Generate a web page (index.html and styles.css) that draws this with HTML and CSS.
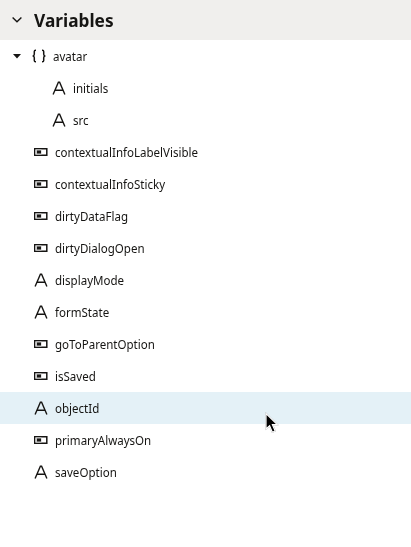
FILE: index.html
```html
<!DOCTYPE html>
<html lang="en">
<head>
<meta charset="utf-8">
<title>Variables</title>
<link rel="stylesheet" href="styles.css">
</head>
<body>
<svg class="defs" aria-hidden="true">
  <symbol id="string" viewBox="0 0 14 14"><path d="M1.1 13.5 6.4 1.3H7.6L12.9 13.5M3.1 9.3H10.9" fill="none" stroke="currentColor" stroke-width="1.4"/></symbol>
  <symbol id="boolean" viewBox="0 0 14 14"><path d="M.7 3.7h12.1v6.6H.7z" fill="#fff" stroke="currentColor" stroke-width="1.5"/><path d="M1.4 4.4h6.1v5.2H1.4z" fill="#c8c8c8"/><path d="M3 5.5h4v3H3z" fill="currentColor"/></symbol>
  <symbol id="object" viewBox="0 0 14 14"><path d="M4 1.2H3.6Q2.3 1.2 2.3 2.5V5.3Q2.3 7 .6 7Q2.3 7 2.3 8.7V11.5Q2.3 12.8 3.6 12.8H4M10 1.2H10.4Q11.7 1.2 11.7 2.5V5.3Q11.7 7 13.4 7Q11.7 7 11.7 8.7V11.5Q11.7 12.8 10.4 12.8H10" fill="none" stroke="currentColor" stroke-width="1.5"/></symbol>
</svg>
<header class="header">
  <svg class="chevron" viewBox="0 0 10 6"><path d="M.6.6 5 4.8 9.4.6" fill="none" stroke="currentColor" stroke-width="1.4"/></svg>
  <h1 class="title">Variables</h1>
</header>
<ul class="tree">
  <li class="row parent"><svg class="caret" viewBox="0 0 8 5"><path d="M0 0h8L4 4.6z" fill="currentColor"/></svg><svg class="icon"><use href="#object"/></svg><span class="label">avatar</span></li>
  <li class="row child"><svg class="icon"><use href="#string"/></svg><span class="label">initials</span></li>
  <li class="row child"><svg class="icon"><use href="#string"/></svg><span class="label">src</span></li>
  <li class="row"><svg class="icon"><use href="#boolean"/></svg><span class="label">contextualInfoLabelVisible</span></li>
  <li class="row"><svg class="icon"><use href="#boolean"/></svg><span class="label">contextualInfoSticky</span></li>
  <li class="row"><svg class="icon"><use href="#boolean"/></svg><span class="label">dirtyDataFlag</span></li>
  <li class="row"><svg class="icon"><use href="#boolean"/></svg><span class="label">dirtyDialogOpen</span></li>
  <li class="row"><svg class="icon"><use href="#string"/></svg><span class="label">displayMode</span></li>
  <li class="row"><svg class="icon"><use href="#string"/></svg><span class="label">formState</span></li>
  <li class="row"><svg class="icon"><use href="#boolean"/></svg><span class="label">goToParentOption</span></li>
  <li class="row"><svg class="icon"><use href="#boolean"/></svg><span class="label">isSaved</span></li>
  <li class="row hovered"><svg class="icon"><use href="#string"/></svg><span class="label">objectId</span></li>
  <li class="row"><svg class="icon"><use href="#boolean"/></svg><span class="label">primaryAlwaysOn</span></li>
  <li class="row"><svg class="icon"><use href="#string"/></svg><span class="label">saveOption</span></li>
</ul>
<svg class="cursor" viewBox="0 0 14 22"><path d="M1 1.5V17L4.6 13.8 7.3 20.2 10.2 19 7.4 12.6H12.3Z" fill="#000" stroke="#fff" stroke-width="1.2"/></svg>
</body>
</html>
```
FILE: styles.css
```css
body {
  margin: 0;
  height: 547px;
  overflow: hidden;
  background: #fff;
  color: #161513;
  font-family: "Noto Sans", sans-serif;
}
.defs {
  position: absolute;
  width: 0;
  height: 0;
}
.header {
  display: flex;
  align-items: center;
  height: 40px;
  padding-left: 12px;
  background: #f0efed;
}
.chevron {
  width: 10px;
  height: 6px;
  margin-right: 12px;
}
.title {
  margin: 0;
  font-size: 18.5px;
  font-weight: 700;
  line-height: 24px;
  transform: scaleX(0.935);
  transform-origin: left;
}
.tree {
  margin: 0;
  padding: 0;
  list-style: none;
}
.row {
  display: flex;
  align-items: center;
  height: 32px;
  padding-left: 34px;
}
.parent {
  padding-left: 13px;
}
.child {
  padding-left: 52px;
}
.hovered {
  background: #e4f1f7;
}
.caret {
  width: 8px;
  height: 5px;
  margin-right: 11px;
}
.icon {
  width: 14px;
  height: 14px;
  margin-right: 7px;
  flex: none;
}
.label {
  font-size: 13px;
  line-height: 18px;
  transform: scaleX(0.888);
  transform-origin: left;
}
.cursor {
  position: absolute;
  left: 265px;
  top: 412px;
  width: 14px;
  height: 22px;
  filter: drop-shadow(0 0 0.7px rgba(0, 0, 0, 0.5));
}
```
